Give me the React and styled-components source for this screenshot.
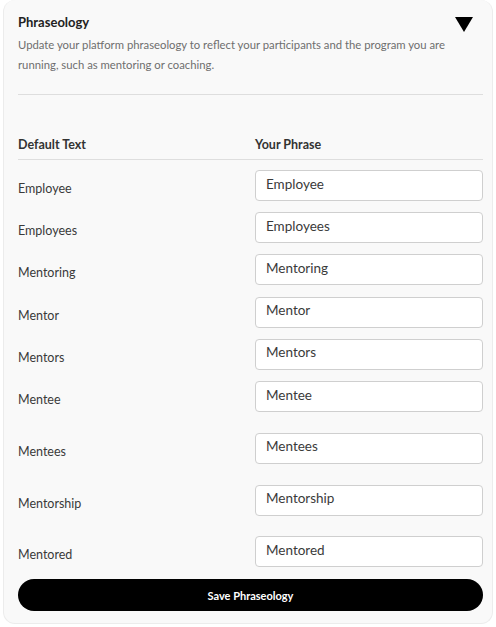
import React, { useState } from 'react';
import styled, { createGlobalStyle } from 'styled-components';

const GlobalStyle = createGlobalStyle`
  body {
    margin: 0;
    background: #ffffff;
    font-family: Lato, "Noto Sans", sans-serif;
  }
  * { box-sizing: border-box; }
`;

const phrases = [
  { key: 'Employee', tall: false },
  { key: 'Employees', tall: false },
  { key: 'Mentoring', tall: false },
  { key: 'Mentor', tall: false },
  { key: 'Mentors', tall: false },
  { key: 'Mentee', tall: true },
  { key: 'Mentees', tall: true },
  { key: 'Mentorship', tall: true },
  { key: 'Mentored', tall: true },
];

function App() {
  const [values, setValues] = useState(
    Object.fromEntries(phrases.map((p) => [p.key, p.key]))
  );

  const onChange = (key) => (e) => {
    setValues({ ...values, [key]: e.target.value });
  };

  return (
    <>
      <GlobalStyle />
      <Card>
        <Header>
          <div>
            <Title>Phraseology</Title>
            <Description>
              Update your platform phraseology to reflect your participants and the program you are
              running, such as mentoring or coaching.
            </Description>
          </div>
          <Toggle aria-label="collapse">
            <svg width="18" height="15" viewBox="0 0 18 15">
              <path d="M0 0 H18 L9 15 Z" fill="#000" />
            </svg>
          </Toggle>
        </Header>
        <Divider />
        <TableHead>
          <HeadCell>Default Text</HeadCell>
          <HeadCell>Your Phrase</HeadCell>
        </TableHead>
        {phrases.map((p) => (
          <Row key={p.key} $tall={p.tall}>
            <Label>{p.key}</Label>
            <Input value={values[p.key]} onChange={onChange(p.key)} />
          </Row>
        ))}
        <SaveButton>Save Phraseology</SaveButton>
      </Card>
    </>
  );
}

export default App;

const Card = styled.div`
  margin: 0 3px;
  width: 490px;
  height: 624px;
  background: #f9f9f9;
  border: 1px solid #ececec;
  border-top: none;
  border-radius: 12px;
  padding: 14px 10px 12px 14px;
  display: flex;
  flex-direction: column;
`;

const Header = styled.div`
  display: flex;
  justify-content: space-between;
  align-items: flex-start;
`;

const Title = styled.div`
  font-size: 13px;
  line-height: 16px;
  font-weight: 700;
  color: #222;
`;

const Description = styled.div`
  margin-top: 5px;
  font-size: 11.3px;
  line-height: 20px;
  color: #6e6e6e;
  font-weight: 400;
  max-width: 440px;
`;

const Toggle = styled.div`
  margin: 3px 9px 0 0;
  line-height: 0;
`;

const Divider = styled.div`
  margin-top: 19px;
  height: 1px;
  background: #dedede;
  width: 465px;
`;

const TableHead = styled.div`
  display: grid;
  grid-template-columns: 237px 1fr;
  padding: 42px 0 6px 0;
  width: 465px;
  border-bottom: 1px solid #dedede;
`;

const HeadCell = styled.div`
  font-size: 12.5px;
  line-height: 16px;
  font-weight: 700;
  color: #333;
`;

const Row = styled.div`
  display: grid;
  grid-template-columns: 237px 228px;
  align-items: start;
  height: ${(p) => (p.$tall ? '52px' : '42.4px')};
`;

const Label = styled.div`
  margin-top: 21px;
  font-size: 12.5px;
  line-height: 16px;
  color: #3a3a3a;
`;

const Input = styled.input`
  margin-top: 10px;
  height: 31px;
  width: 228px;
  border: 1px solid #cfcfcf;
  border-radius: 4px;
  background: #fff;
  padding: 0 10px 4px;
  font-family: Lato, "Noto Sans", sans-serif;
  font-size: 13.5px;
  color: #3a3a3a;
  outline: none;
`;

const SaveButton = styled.button`
  margin-top: 1px;
  width: 465px;
  height: 32px;
  border: none;
  border-radius: 16px;
  background: #000;
  color: #fff;
  font-family: Lato, "Noto Sans", sans-serif;
  font-size: 11px;
  font-weight: 700;
  cursor: pointer;
`;
